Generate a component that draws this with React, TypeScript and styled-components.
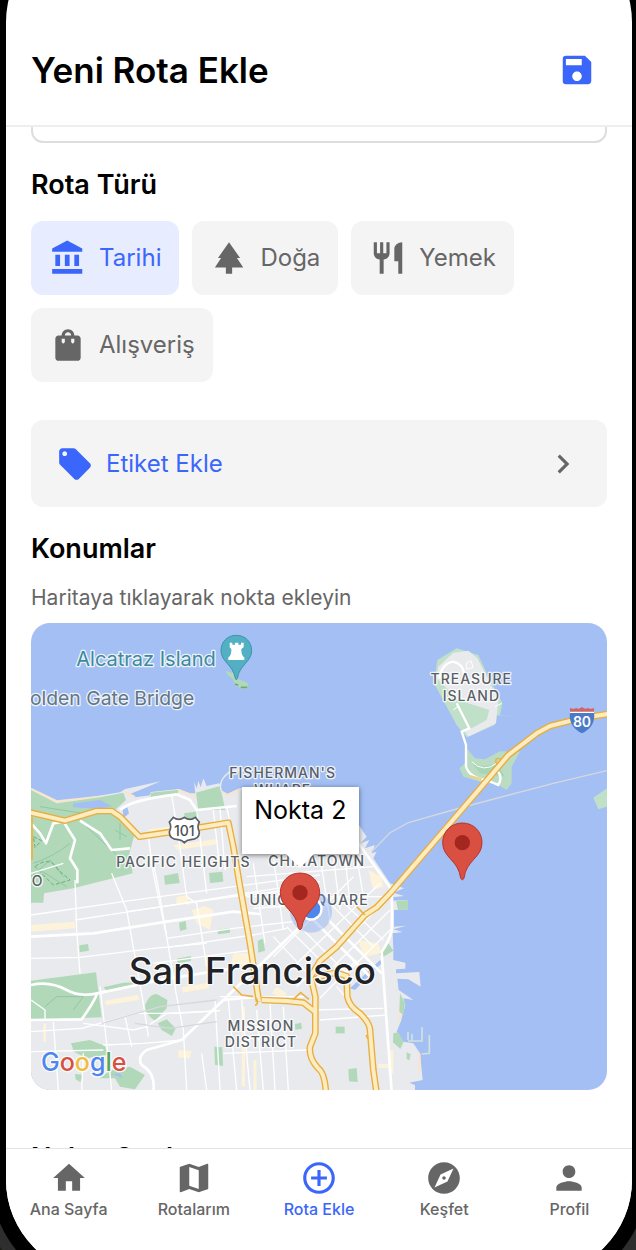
import React, { useState } from "react";
import styled, { createGlobalStyle, css } from "styled-components";
import {
  MdSave,
  MdPark,
  MdRestaurant,
  MdShoppingBag,
  MdLocalOffer,
  MdChevronRight,
  MdHome,
  MdMap,
  MdAddCircleOutline,
  MdExplore,
  MdPerson,
} from "react-icons/md";

const color = {
  primary: "#3b66fb",
  primarySoft: "#e7edfe",
  chip: "#f4f4f4",
  muted: "#666666",
  line: "#eeeeee",
  inputLine: "#dddddd",
};

const GlobalStyle = createGlobalStyle`
  *, *::before, *::after { box-sizing: border-box; }
  body {
    margin: 0;
    background: #1c1c14;
    font-family: Inter, "Liberation Sans", sans-serif;
    color: #000;
    -webkit-font-smoothing: antialiased;
  }
  button, textarea { font: inherit; color: inherit; }
`;

const Device = styled.div`
  height: 100vh;
  padding: 0 4px 0 6px;
  display: flex;
  flex-direction: column;
  overflow: hidden;
`;

const Screen = styled.div`
  flex: 1;
  min-height: 0;
  margin: -73px 0 -25px;
  padding: 73px 0 25px;
  display: flex;
  flex-direction: column;
  overflow: hidden;
  background: #fff;
  border-radius: 95px;
  box-shadow: 0 0 0 15px #000, 0 0 0 26px #2e2e2e;
`;

const Header = styled.header`
  flex: none;
  height: 127px;
  padding: 14px 36px 0 25px;
  display: flex;
  align-items: center;
  justify-content: space-between;
  border-bottom: 2px solid ${color.line};
`;

const Title = styled.h1`
  margin: 0;
  font-size: 35px;
  line-height: 44px;
  font-weight: 600;
`;

const IconButton = styled.button`
  display: flex;
  padding: 0;
  border: 0;
  background: none;
  color: ${color.primary};
  cursor: pointer;
`;

const Content = styled.main`
  flex: 1;
  min-height: 0;
  padding: 0 25px;
  overflow: hidden;
`;

const Description = styled.textarea`
  display: block;
  width: 100%;
  height: 156px;
  margin-top: -140px;
  padding: 18px;
  border: 2px solid ${color.inputLine};
  border-radius: 12px;
  resize: none;
  outline: none;
`;

const Section = styled.section`
  margin-top: 24px;
`;

const SectionTitle = styled.h2`
  margin: 0;
  font-size: 27px;
  line-height: 36px;
  font-weight: 600;
`;

const ChipRow = styled.div`
  margin-top: 18px;
  display: flex;
  flex-wrap: wrap;
  gap: 13px;
`;

const Chip = styled.button<{ $active: boolean }>`
  height: 74px;
  padding: 0 18px;
  display: flex;
  align-items: center;
  gap: 12px;
  border: 0;
  border-radius: 12px;
  font-size: 24px;
  line-height: 32px;
  cursor: pointer;
  background: ${(p) => (p.$active ? color.primarySoft : color.chip)};
  && { color: ${(p) => (p.$active ? color.primary : color.muted)}; }
`;

const TagButton = styled.button`
  width: 100%;
  height: 87px;
  margin-top: 38px;
  padding: 0 25px;
  display: flex;
  align-items: center;
  gap: 12px;
  border: 0;
  border-radius: 12px;
  background: ${color.chip};
  font-size: 24px;
  line-height: 32px;
  cursor: pointer;
  && { color: ${color.primary}; }

  svg:last-child {
    margin-left: auto;
    color: ${color.muted};
  }
`;

const Hint = styled.p`
  margin: 17px 0 11px;
  font-size: 21px;
  line-height: 28px;
  color: ${color.muted};
`;

const MapCard = styled.div`
  position: relative;
  width: 100%;
  aspect-ratio: 576 / 467;
  overflow: hidden;
  border-radius: 19px;
  background: #a3bff4;

  > svg { display: block; width: 100%; height: 100%; }
`;

const Callout = styled.div`
  position: absolute;
  left: 36.6%;
  top: 35.1%;
  width: 117px;
  height: 67px;
  padding-top: 6px;
  background: #fff;
  box-shadow: 0 1px 5px rgba(0, 0, 0, 0.5);
  font-size: 25px;
  line-height: 34px;
  text-align: center;

  &::after {
    content: "";
    position: absolute;
    left: 44px;
    top: 67px;
    border: 14px solid transparent;
    border-top-color: #fff;
    border-bottom: 0;
  }
`;

const OrderSection = styled.section`
  margin-top: 50px;
`;

const TabBar = styled.nav`
  flex: none;
  height: 102px;
  display: grid;
  grid-template-columns: repeat(5, 1fr);
  border-top: 1px solid #e4e4e4;
  background: #fff;
`;

const Tab = styled.a<{ $active?: boolean }>`
  padding-top: 10px;
  display: flex;
  flex-direction: column;
  align-items: center;
  gap: 2px;
  font-size: 16px;
  line-height: 20px;
  font-weight: 500;
  text-decoration: none;
  white-space: nowrap;
  ${(p) => css`color: ${p.$active ? color.primary : color.muted};`}
`;

const BankIcon = ({ size }: { size: number }) => (
  <svg width={size} height={size} viewBox="0 0 24 24" fill="currentColor" aria-hidden>
    <path d="M11.5 1L2 6v2h19V6M16 10v7h3v-7M2 22h19v-3H2M10 10v7h3v-7M4 10v7h3v-7H4z" />
  </svg>
);

const kinds = [
  { id: "tarihi", label: "Tarihi", Icon: BankIcon },
  { id: "doga", label: "Doğa", Icon: MdPark },
  { id: "yemek", label: "Yemek", Icon: MdRestaurant },
  { id: "alisveris", label: "Alışveriş", Icon: MdShoppingBag },
];

const tabs = [
  { label: "Ana Sayfa", Icon: MdHome },
  { label: "Rotalarım", Icon: MdMap },
  { label: "Rota Ekle", Icon: MdAddCircleOutline, active: true },
  { label: "Keşfet", Icon: MdExplore },
  { label: "Profil", Icon: MdPerson },
];

const MapLabel = styled.text<{ $size?: number; $fill?: string; $weight?: number; $tracked?: boolean; $start?: boolean }>`
  font-family: Inter, "Liberation Sans", sans-serif;
  font-size: ${(p) => p.$size ?? 42}px;
  font-weight: ${(p) => p.$weight ?? 500};
  fill: ${(p) => p.$fill ?? "#5a5f66"};
  stroke: rgba(255, 255, 255, 0.8);
  stroke-width: 8px;
  stroke-linejoin: round;
  paint-order: stroke;
  text-anchor: ${(p) => (p.$start ? "start" : "middle")};
  letter-spacing: ${(p) => (p.$tracked ? "3px" : "normal")};
`;

const Pin = ({ x, y }: { x: number; y: number }) => (
  <g transform={`translate(${x} ${y})`}>
    <path
      d="M0-59C-34-59-59-33-59 0c0 46 48 52 54 107q5 9 10 0C11 52 59 46 59 0 59-33 34-59 0-59z"
      fill="#d94f41"
      stroke="#b8352b"
      strokeWidth="3"
    />
    <circle r="23" fill="#a3271f" />
  </g>
);

const highways = [
  "M20 605L135 632L230 603H275L300 620L358 680L480 662L625 638L640 710L660 830L690 1000L717 1175",
  "M1770 311L1680 325L1590 348L1550 370L1465 435L1380 535L1200 745L1110 850L1070 892L1035 915L950 1010L900 1053L872 1100L886 1160V1270L870 1310Q866 1345 895 1375Q915 1390 918 1450",
  "M725 1170L800 1173L850 1178L884 1205",
  "M888 1108Q930 1078 980 1098L982 1160Q988 1190 1020 1210Q1050 1240 1050 1260L1060 1380L1070 1450",
];

const avenues = [
  "M33 980L220 970L440 935L640 905L720 912",
  "M33 1230L185 1228Q220 1180 232 1150L430 1108L640 1075",
  "M33 1125Q90 1112 140 1140Q180 1162 232 1150",
  "M400 1445Q408 1390 365 1365Q350 1340 380 1320L485 1290L610 1170L840 950",
  "M610 1170L720 1160",
  "M1015 700L1112 835Q1118 860 1115 960Q1110 990 1085 1025L1090 1100L1115 1445",
  "M33 640L60 670L78 700L100 640L130 634L165 690L150 745L172 780V820",
  "M180 632L240 670L275 720L330 715",
  "M300 600Q330 570 470 553L510 570L530 600L650 588",
  "M925 930L1085 1090M870 920L1060 1110",
];

const streets = [
  "M33 915L330 872L900 795", "M165 930L330 905L900 815", "M320 905L640 860L900 830", "M440 985L640 955L820 935",
  "M445 1012L700 975L800 955", "M33 1045L180 1042L400 1015L560 1000", "M400 1060L620 1030L700 1020",
  "M33 1170L75 1200V1230", "M33 1265L185 1255L350 1210L470 1210L590 1203", "M250 1305L370 1300L490 1290",
  "M190 1240L340 1260L380 1250L440 1210L600 1202", "M33 1325L250 1320",
  "M165 810L170 960L180 1090", "M275 790L320 900L370 1180L385 1280", "M385 680L400 790L440 980L470 1160",
  "M455 555L475 680L500 860L530 880L560 1070", "M530 600L560 850", "M580 600L600 780M600 595L615 780M620 590L630 640",
  "M395 735L420 860L440 980", "M240 1130L260 1300L275 1440", "M315 1220L335 1310M470 1160L490 1260L500 1440",
  "M100 1235L115 1440M545 1330L560 1440M585 1170L600 1440M625 1170L650 1440M665 1170L690 1440M710 1200L730 1440M750 1180L765 1440M790 1190L805 1440",
  "M600 1160H860M610 1330L860 1320M700 760L735 1000M760 740L790 960M680 860H1090M700 895L1000 875M680 800L1060 770",
  "M900 740L930 930M940 740L960 900M975 740L990 880M1010 740L1030 860",
  "M760 1040L1000 800M800 1090L1080 820M830 1130L1110 860M940 1070L1110 900M980 1090L1110 960",
  "M760 980L900 1130M800 950L940 1090M840 950L980 1090M900 850L1060 1010M940 850L1090 990",
  "M900 1165L1010 1050M900 1230L1100 1215M950 1130L1010 1200",
  "M33 790L130 760M185 1445L190 1330M870 1200L1090 1195",
];

const parks = [
  "M33 540L110 580L240 562L310 548L318 570L285 600L345 668L328 730L338 790L160 835L72 850L70 878H33z",
  "M33 1112L228 1087L245 1222L33 1230z",
  "M528 548L600 528L616 600L535 600z", "M492 610l42-6v22h-38z", "M392 548l82-8v14l-82 6z",
  "M432 797l42-8 5 30-44 5z", "M567 789l40-4 3 30-40 4z", "M477 938l20-5 3 25-20 5z", "M592 960l38-6v14l-36 5z",
  "M713 992l16-6 6 36-20 6z", "M178 1006l26-4 3 20-28 5z", "M470 1046l43-8v14l-40 8z", "M825 1242l18-4 3 18-20 3z",
  "M583 1310l24 2 2 56-24-4z", "M375 1185Q390 1150 410 1152L442 1170L440 1195L405 1232Q375 1215 375 1185z",
  "M413 1240L440 1228L467 1255L456 1278L425 1260z", "M153 1300L210 1290L255 1308L262 1334L200 1345L162 1325z",
  "M165 1392l24 2-8 22-14-8z", "M240 1405L270 1382L330 1370L375 1395L345 1438L300 1430L285 1405z",
  "M250 1132L310 1118L385 1115L384 1122L260 1142z", "M947 1250h27v20h-27z", "M985 1378l25-4 3 42-26-2z",
  "M1073 1028L1105 1000L1120 1022L1088 1042z", "M1120 1270l15-3 16 28-10 22-22-20z", "M1140 1150l15 30-5 35-12-10z",
  "M1160 1327l12 6-4 18-8-4z", "M1128 874l36-4v28l-30 2z",
];

const sands = [
  "M33 945l130-10 4 20-134 10z", "M255 1172l100-18 2 16-100 16z", "M385 658l100-14v14l-96 12z",
  "M460 705l130-18 2 16-120 16z", "M515 900l40-12 25 12-10 60-40-20z", "M470 860l35-5 5 30-42-5z",
  "M640 1030l45 0 5 30-60 10z", "M485 1132l80-14 2 16-78 14z", "M1045 780l40 20 5 30-30 10z",
  "M1015 990l60 10 10 30-55 10z", "M770 1130l30 20-8 18-36-18z", "M475 1320l40 2-6 24-34-4z",
  "M70 1240h8v55h-8zM665 1190h10v240h-10zM700 1350h10v90h-10z", "M1075 1362h30v12h-30z", "M1105 1320h15v70h-15z",
];

const CityMap = () => (
  <svg viewBox="33 39 1728 1401" preserveAspectRatio="xMidYMid slice" role="img" aria-label="San Francisco haritası">
    {/* mainland, with the piers on the east side */}
    <path
      d="M33 535L60 548L110 572L160 570L300 547L316 537L422 514L380 532L330 552L345 562L390 556L392 546L478 537L500 550L526 550L522 516L530 535L535 512L542 532L550 505L560 528L598 520L605 545L622 552L660 535L700 530L760 535L820 530L870 532L925 535L1013 640L1040 680L1022 700L1048 690L1035 715L1065 705L1055 730L1070 725L1060 745L1110 820L1152 835L1120 848L1152 858L1120 862V872L1164 870V898L1122 900V950L1158 947L1120 958L1148 966L1118 970L1120 1020V1050L1156 1058V1076L1128 1078L1128 1090L1198 1086L1202 1130L1165 1108L1132 1106L1136 1140L1180 1170L1150 1165L1156 1185L1142 1235L1130 1265L1150 1295L1180 1300L1200 1330L1208 1410L1168 1418L1185 1425V1445H20V535z"
      fill="#e8eaed"
    />
    <path d="M33 537L60 550L110 574L240 561M316 545L345 562M400 552L478 541L528 560M605 545L622 555L660 538M1198 1330V1390M1140 1190V1235" fill="none" stroke="#f7e6cd" strokeWidth="7" />
    {parks.map((d) => <path key={d} d={d} fill="#b1d9b9" />)}
    {sands.map((d) => <path key={d} d={d} fill="#fdf2da" />)}
    <path d="M160 580L240 570L275 588L240 597L158 592zM308 600l14-8 5 18-16 14zM275 1392l25-2 8 14zM990 1135L1080 1050l5 10-80 80z" fill="#a3bff4" />
    <g fill="none" stroke="#8bc39b" strokeWidth="3" opacity="0.8">
      <path d="M40 760Q100 740 150 700M60 780L140 830M200 650L290 735M33 800L90 750L130 800M60 590L190 610M285 660L320 680M300 640V690M75 1190L110 1160L190 1160L160 1200" />
      <path d="M45 770Q90 735 115 780L150 810L100 825zM40 680l25 12-20 20z" stroke="#58a56f" strokeDasharray="12 6" />
    </g>
    <g fill="none" stroke="#fff" strokeWidth="4">{streets.map((d) => <path key={d} d={d} />)}</g>
    <g fill="none" stroke="#fff" strokeWidth="8" strokeLinejoin="round">{avenues.map((d) => <path key={d} d={d} />)}</g>
    <path d="M605 545Q592 515 625 488Q645 478 675 482" fill="none" stroke="#e8eaed" strokeWidth="4" />
    <g fill="none" stroke="#d5d8dd" strokeWidth="4">
      <path d="M1055 725L1110 668L1165 638L1320 594L1600 520L1761 482M245 1240L420 1190L590 1170M345 1240L450 1255L590 1235" />
    </g>
    <path d="M1164 1265V1290M1176 1272V1292M1164 1293H1206V1252M1205 1332L1228 1330V1275" fill="none" stroke="#cfe3dd" strokeWidth="5" />

    {/* Treasure Island and Yerba Buena */}
    <path d="M1252 150L1310 115L1375 135L1400 190L1447 280L1440 315L1482 322L1430 315L1425 345L1340 382L1310 345L1242 220z" fill="#c1e0c9" />
    <path d="M1255 170L1300 128L1345 122L1372 145L1398 195L1435 270L1428 340L1345 380L1335 365L1400 330L1408 300L1315 270L1250 205z" fill="#e8eaed" />
    <path d="M1340 415L1365 445L1395 448L1440 424L1500 425L1475 470L1475 520L1460 540L1435 525L1380 515L1330 500L1318 475L1335 460z" fill="#b9dcc3" />
    <path d="M1350 450Q1380 480 1430 460L1455 500L1380 490z" fill="#a9d5b4" />
    <path d="M1258 205Q1265 160 1300 155Q1340 165 1330 210M1310 280L1348 355L1325 365L1338 405V470Q1350 505 1400 510L1435 525Q1450 500 1430 480" fill="none" stroke="#fff" strokeWidth="7" />
    <path d="M1338 160l15-8 6 20-18 6zM1425 290l20-10M1300 300l15-12M1355 455Q1390 490 1430 460" fill="none" stroke="#fff" strokeWidth="3" />
    <path d="M1720 563L1761 535V590L1735 598z" fill="#c1e0c9" />
    <circle cx="1435" cy="453" r="8" fill="none" stroke="#edb13f" strokeWidth="4" />
    <path d="M1350 498L1385 508" stroke="#f5ce7f" strokeWidth="6" />

    <path d="M617 182L640 190L655 208L682 218L686 236L665 236L645 225L640 208L622 195z" fill="#b1d9b9" />
    <path d="M662 232h20M645 222l10 4" fill="none" stroke="#6aab7c" strokeWidth="5" />

    <g fill="none" stroke="#e9ad3c" strokeWidth="20" strokeLinejoin="round">{highways.map((d) => <path key={d} d={d} />)}</g>
    <g fill="none" stroke="#fcecc0" strokeWidth="12" strokeLinejoin="round">{highways.map((d) => <path key={d} d={d} />)}</g>
    <path d="M36 620V750M640 1130L665 1155L700 1160M1010 890L1035 915M1038 1275l6 12M705 1160q15 20 0 26M820 1168l22-20 25 20" fill="none" stroke="#edb13f" strokeWidth="5" />

    {/* road shields */}
    <path d="M460 622Q476 634 493 622Q510 634 526 622L538 636Q530 650 538 666Q538 688 512 689Q500 690 493 698Q486 690 474 689Q448 688 448 666Q456 650 448 636z" fill="#fff" stroke="#5a5f66" strokeWidth="5" />
    <MapLabel x="493" y="677" $size={42} $fill="#4a4e54">101</MapLabel>
    <path d="M1650 306H1722Q1728 350 1686 370Q1644 350 1650 306z" fill="#4b7bc8" />
    <path d="M1650 306V293Q1662 300 1668 293Q1676 300 1686 291Q1696 300 1704 293Q1710 300 1722 293V306z" fill="#cf6663" />
    <path d="M1650 307H1722" stroke="#fff" strokeWidth="4" />
    <text x="1686" y="350" textAnchor="middle" fontFamily="Inter, sans-serif" fontSize="42" fontWeight="600" fill="#fff">80</text>

    <MapLabel x="378" y="167" $size={60} $weight={400} $fill="#3d8a9b">Alcatraz Island</MapLabel>
    <MapLabel x="30" y="286" $size={58} $weight={400} $fill="#647683" $start>olden Gate Bridge</MapLabel>
    <path d="M649 76C622 76 603 96 603 122C603 155 640 165 646 205Q649 214 652 205C658 165 695 155 695 122C695 96 676 76 649 76z" fill="#52afc4" stroke="#3f93a7" strokeWidth="3" />
    <path d="M629 98h8v6h8v-6h10v6h8v-6h8v14l-7 5v5q1 16 9 20v8h-48v-8q8-4 9-20v-5l-5-5z" fill="#fff" />

    <MapLabel x="788" y="505" $tracked>FISHERMAN'S</MapLabel>
    <MapLabel x="788" y="555" $tracked>WHARF</MapLabel>
    <MapLabel x="1354" y="223" $tracked>TREASURE</MapLabel>
    <MapLabel x="1354" y="274" $tracked>ISLAND</MapLabel>
    <MapLabel x="490" y="771" $tracked>PACIFIC HEIGHTS</MapLabel>
    <MapLabel x="890" y="769" $tracked>CHINATOWN</MapLabel>
    <MapLabel x="867" y="885" $tracked>UNION SQUARE</MapLabel>
    <MapLabel x="723" y="1263" $tracked>MISSION</MapLabel>
    <MapLabel x="723" y="1312" $tracked>DISTRICT</MapLabel>
    <MapLabel x="35" y="828" $start>O</MapLabel>
    <MapLabel x="697" y="1123" $size={110} $fill="#202226">San Francisco</MapLabel>
    <MapLabel x="63" y="1383" $size={75} $start>
      <tspan fill="#4f86ec">G</tspan><tspan fill="#d95040">o</tspan><tspan fill="#f0bd41">o</tspan><tspan fill="#4f86ec">g</tspan><tspan fill="#58a65c">l</tspan><tspan fill="#d95040">e</tspan>
    </MapLabel>

    <circle cx="873" cy="905" r="63" fill="#6d9bf0" opacity="0.35" />
    <circle cx="873" cy="897" r="35" fill="#fff" />
    <circle cx="873" cy="897" r="28" fill="#4f86ec" />
    <Pin x={1327} y={698} />
    <Pin x={840} y={848} />
  </svg>
);

export default function App() {
  const [kind, setKind] = useState("tarihi");
  return (
    <>
      <GlobalStyle />
      <Device>
        <Screen>
          <Header>
            <Title>Yeni Rota Ekle</Title>
            <IconButton type="button" aria-label="Kaydet">
              <MdSave size={38} />
            </IconButton>
          </Header>
          <Content>
            <Description aria-label="Açıklama" />
            <Section>
              <SectionTitle>Rota Türü</SectionTitle>
              <ChipRow>
                {kinds.map(({ id, label, Icon }) => (
                  <Chip key={id} type="button" $active={id === kind} aria-pressed={id === kind} onClick={() => setKind(id)}>
                    <Icon size={38} />
                    {label}
                  </Chip>
                ))}
              </ChipRow>
              <TagButton type="button">
                <MdLocalOffer size={38} />
                Etiket Ekle
                <MdChevronRight size={38} />
              </TagButton>
            </Section>
            <Section>
              <SectionTitle>Konumlar</SectionTitle>
              <Hint>Haritaya tıklayarak nokta ekleyin</Hint>
              <MapCard>
                <CityMap />
                <Callout>Nokta 2</Callout>
              </MapCard>
            </Section>
            <OrderSection>
              <SectionTitle>Nokta Sıralaması</SectionTitle>
            </OrderSection>
          </Content>
          <TabBar>
            {tabs.map(({ label, Icon, active }) => (
              <Tab key={label} href="#" $active={active} aria-current={active ? "page" : undefined}>
                <Icon size={38} />
                {label}
              </Tab>
            ))}
          </TabBar>
        </Screen>
      </Device>
    </>
  );
}
